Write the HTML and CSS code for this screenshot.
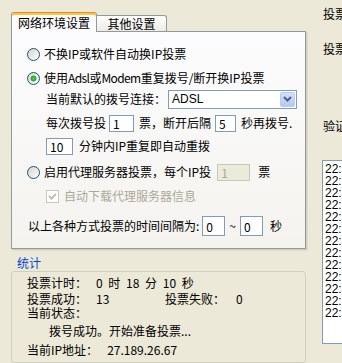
FILE: index.html
```html
<!DOCTYPE html>
<html lang="zh-CN">

<head>
    <meta charset="UTF-8">
    <meta name="viewport" content="width=device-width, initial-scale=1.0">
    <title>投票设置</title>
    <link rel="stylesheet" href="styles.css">
</head>

<body>
    <div class="wrap">
        <div class="left">
            <!-- 탭 -->
            <ul class="tabs">
                <li class="on">网络环境设置</li>
                <li>其他设置</li>
            </ul>

            <div class="pane">
                <div class="row r1"><span class="radio"></span>不换IP或软件自动换IP投票</div>
                <div class="row r2"><span class="radio on"></span>使用<span class="en">Adsl</span>或<span class="en">Modem</span>重复拨号/断开换IP投票</div>
                <div class="row r3 sub">
                    当前默认的拨号连接：
                    <div class="select">
                        <span>ADSL</span>
                        <span class="btn">
                            <svg width="9" height="6" viewBox="0 0 9 6">
                                <polyline points="1,1 4.5,4.5 8,1" fill="none" stroke="#4d6185" stroke-width="2" />
                            </svg>
                        </span>
                    </div>
                </div>
                <div class="row r4 sub">
                    每次拨号投<input class="txt n1" type="text" value="1"><span class="t1">票，断开后隔</span><input class="txt n5" type="text" value="5"><span class="t2">秒再拨号.</span>
                </div>
                <div class="row r5 sub">
                    <input class="txt n10" type="text" value="10"><span class="t3">分钟内IP重复即自动重拨</span>
                </div>
                <div class="row r6"><span class="radio"></span>启用代理服务器投票，每个IP投<input class="txt np" type="text" value="1" disabled><span class="t4">票</span></div>
                <div class="row r7 sub dim">
                    <span class="check">
                        <svg width="11" height="11" viewBox="0 0 11 11">
                            <polyline points="2,5 4.5,7.5 9,3" fill="none" stroke="#c2bfae" stroke-width="2" />
                        </svg>
                    </span>自动下载代理服务器信息
                </div>
                <div class="row r8">
                    以上各种方式投票的时间间隔为:<input class="txt tt" type="text" value="0"><span class="tilde">~</span><input class="txt tt" type="text" value="0"><span class="t5">秒</span>
                </div>
            </div>

            <!-- 통계 -->
            <div class="stat-title">统计</div>
            <div class="stat">
                <div class="srow s1"><b>投票计时：</b><span class="val">0 时 18 分 10 秒</span></div>
                <div class="srow s2"><b>投票成功：</b><span class="val w">13</span><b class="fail">投票失败：</b><span class="val">0</span></div>
                <div class="srow s3"><b>当前状态：</b></div>
                <div class="srow s4 msg">拨号成功。开始准备投票...</div>
                <div class="srow s5"><b>当前IP地址：</b><span class="val">27.189.26.67</span></div>
            </div>
        </div>

        <div class="right">
            <p class="p1">投票</p>
            <p class="p2">投票</p>
            <p class="p3">验证</p>
            <div class="log">
                <div>22:</div>
                <div>22:</div>
                <div>22:</div>
                <div>22:</div>
                <div>22:</div>
                <div>22:</div>
                <div>22:</div>
                <div>22:</div>
                <div>22:</div>
                <div>22:</div>
                <div>22:</div>
                <div>22:</div>
                <div>22:</div>
            </div>
        </div>
    </div>
</body>

</html>
```

FILE: styles.css
```css
* {
    margin: 0;
    padding: 0;
    box-sizing: border-box;
    list-style: none;
}

body {
    width: 342px;
    height: 363px;
    overflow: hidden;
    background-color: #ece9d8;
    font-family: "Noto Sans CJK SC", sans-serif;
    font-size: 12px;
    color: #000;
}

.wrap {
    display: flex;
    height: 363px;
}

.left {
    width: 306px;
    flex-shrink: 0;
    padding: 12px 0 0 11px;
}

/* tabs */
.tabs {
    display: flex;
    align-items: flex-end;
    height: 19px;
}

.tabs li {
    display: flex;
    align-items: center;
    justify-content: center;
    width: 70px;
    height: 16px;
    border: 1px solid #919b9c;
    border-bottom: 0;
    border-left: 0;
    border-radius: 0 3px 0 0;
    background: linear-gradient(#fff, #ecebe6);
    line-height: 1;
    white-space: nowrap;
}

.tabs li.on {
    position: relative;
    z-index: 1;
    width: 86px;
    height: 20px;
    margin-bottom: -1px;
    padding-top: 1px;
    border-left: 1px solid #919b9c;
    border-top: 1px solid #e68b2c;
    border-radius: 3px 3px 0 0;
    background: #fcfcfe;
    box-shadow: inset 0 2px 0 #ffc83c;
}

/* pane */
.pane {
    width: 295px;
    height: 218px;
    padding-left: 15px;
    border: 1px solid #919b9c;
    background: linear-gradient(#fcfcfe, #f4f3ee);
    box-shadow: 1px 1px 0 #d0cdbd, 2px 2px 0 #e0ddcd;
}

.row {
    display: flex;
    align-items: center;
    height: 20px;
    line-height: 16px;
    white-space: nowrap;
}

.r1 { margin-top: 12px; }
.r2 { margin-top: 4px; }
.r3 { margin-top: 1px; }
.r4 { margin-top: 4px; }
.r5 { margin-top: 3px; }
.r6 { margin-top: 6px; }
.r7 { margin-top: 4px; }
.r8 { margin-top: 10px; padding-left: 1px; }

.en {
    letter-spacing: -0.6px;
}

.sub {
    padding-left: 19px;
}

.dim {
    color: #aca899;
}

.radio {
    flex-shrink: 0;
    width: 13px;
    height: 13px;
    margin-right: 4px;
    border: 1px solid #1c5180;
    border-radius: 50%;
    background: linear-gradient(135deg, #d6d2c4, #fff);
}

.radio.on {
    background: radial-gradient(circle, #62d45a 0, #21a121 2.5px, rgba(33, 161, 33, 0) 3.3px), linear-gradient(135deg, #d6d2c4, #fff);
}

.check {
    display: flex;
    align-items: center;
    justify-content: center;
    width: 13px;
    height: 13px;
    margin-right: 5px;
    border: 1px solid #cac8bb;
    background: #fff;
}

.txt {
    height: 17px;
    padding: 0 3px;
    border: 1px solid #7f9db9;
    background: #fff;
    font-family: "Noto Sans CJK SC", sans-serif;
    font-size: 12px;
    color: #000;
    outline: none;
}

.txt:disabled {
    border-color: #c9c7ba;
    background: #ebeadb;
    color: #aca899;
}

.n1 { width: 25px; margin-left: 3px; }
.n5 { width: 21px; margin-left: 4px; }
.n10 { width: 27px; }
.np { width: 33px; margin-left: 6px; }
.tt { width: 23px; height: 20px; margin-left: 3px; }

.t1 { margin-left: 5px; }
.t2 { margin-left: 5px; }
.t3 { margin-left: 6px; }
.t4 { margin-left: 8px; }
.t5 { margin-left: 7px; }
.tilde { margin-left: 4px; margin-right: 1px; }

/* select */
.select {
    display: flex;
    align-items: center;
    width: 129px;
    height: 19px;
    margin-left: 2px;
    padding: 1px;
    border: 1px solid #7f9db9;
    background: #fff;
}

.select span {
    flex: 1;
    padding-left: 2px;
    font-family: "Liberation Sans", sans-serif;
}

.select .btn {
    display: flex;
    align-items: center;
    justify-content: center;
    flex: none;
    width: 15px;
    height: 15px;
    padding: 0;
    border: 1px solid #b9cbf3;
    border-radius: 2px;
    background: linear-gradient(#d3e0fd, #b4c8f6);
}

/* stats */
.stat-title {
    height: 14px;
    margin: 7px 0 1px 6px;
    line-height: 14px;
    color: #0046d5;
}

.stat {
    height: 92px;
    padding: 4px 0 0 15px;
    border: 1px solid #d0d0bf;
    border-radius: 3px;
}

.srow {
    display: flex;
    align-items: center;
    height: 14px;
    line-height: 14px;
    white-space: nowrap;
}

.srow b {
    font-weight: normal;
    margin-right: 9px;
}

.s2 { margin-top: 2px; }
.s4 { margin-top: 4px; }
.s5 { margin-top: 5px; }

.val {
    word-spacing: 3px;
}

.val.w {
    width: 69px;
}

.srow b.fail {
    margin-right: 11px;
}

.msg {
    padding-left: 22px;
}

/* right column */
.right {
    flex-shrink: 0;
    width: 36px;
    padding-left: 16px;
    overflow: hidden;
}

.right p {
    height: 14px;
    padding-left: 1px;
    line-height: 14px;
    white-space: nowrap;
}

.p1 { margin-top: 7px; }
.p2 { margin-top: 21px; }
.p3 { margin-top: 63px; }

.log {
    width: 40px;
    height: 184px;
    margin-top: 27px;
    padding: 2px 0 0 2px;
    border: 1px solid #7f9db9;
    border-right: 0;
    background: #fff;
    font-family: "Liberation Sans", sans-serif;
    font-size: 12px;
    line-height: 12px;
    white-space: nowrap;
}
```
